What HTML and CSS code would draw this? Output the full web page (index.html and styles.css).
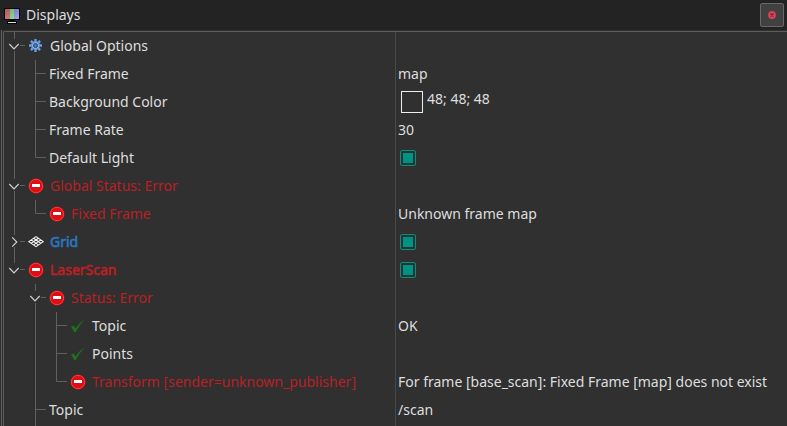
FILE: index.html
```html
<!DOCTYPE html>
<html lang="en">
<head>
<meta charset="utf-8">
<title>Displays</title>
<link rel="stylesheet" href="styles.css">
</head>
<body>
<svg class="defs" width="0" height="0">
  <defs>
    <symbol id="line" viewBox="0 0 21 28"><path class="br" d="M10.5 0V28"/></symbol>
    <symbol id="tee" viewBox="0 0 21 28"><path class="br" d="M10.5 0V28M11 13.5H21"/></symbol>
    <symbol id="end" viewBox="0 0 21 28"><path class="br" d="M10.5 0V13.5H21"/></symbol>
    <symbol id="open" viewBox="0 0 21 28"><path class="br" d="M10.5 0V7M10.5 19V28M16 13.5H21"/><path class="chev" d="M5.3 12L10 16.8L14.7 12"/></symbol>
    <symbol id="openend" viewBox="0 0 21 28"><path class="br" d="M10.5 0V7M16 13.5H21"/><path class="chev" d="M5.3 12L10 16.8L14.7 12"/></symbol>
    <symbol id="closed" viewBox="0 0 21 28"><path class="br" d="M10.5 0V7M10.5 19V28M16 13.5H21"/><path class="chev" d="M8.2 9.3L12.8 14L8.2 18.7"/></symbol>
    <symbol id="error" viewBox="0 0 16 16"><circle cx="8" cy="8" r="7.5" fill="#d0060c"/><circle cx="8" cy="8" r="6.7" fill="#e00d12" stroke="#f04a4c" stroke-width=".9"/><rect x="4" y="6" width="8" height="3" fill="#fff"/></symbol>
    <symbol id="check" viewBox="0 0 16 16"><path fill="#1d731d" d="M1.3 8.8L3.6 7.6L5.6 10.6C7.8 7 10.5 4 14.4 1.7C11 5.4 8 9.5 5.8 14L4.3 14.2Z"/></symbol>
    <symbol id="gear" viewBox="0 0 16 16"><g transform="translate(7.5 7.5)"><path stroke="#6f9fe0" stroke-width="2.3" d="M0-6.5V6.5M-6.5 0H6.5M-4.6-4.6L4.6 4.6M4.6-4.6L-4.6 4.6"/><circle r="4" fill="#8db4e8" stroke="#5b8bd0"/><circle r="2" fill="#4a76b0" stroke="#26466f"/></g></symbol>
    <symbol id="grid" viewBox="0 0 16 16"><path fill="#333" stroke="#f4f4f4" stroke-width="1.1" d="M.8 7.6L8 2.6L15.2 7.6L8 12.6ZM3.2 5.900L10.400 10.900M5.600 4.300L12.800 9.300M12.800 5.900L5.600 10.900M10.400 4.300L3.200 9.300"/></symbol>
  </defs>
</svg>
<header class="titlebar">
  <svg class="monitor" width="16" height="16" viewBox="0 0 16 16">
    <defs><linearGradient id="shade" x2="1" y2="1"><stop stop-color="#000" stop-opacity=".18"/><stop offset="1" stop-color="#fff" stop-opacity=".25"/></linearGradient></defs>
    <rect width="16" height="12" rx="1" fill="#050505"/><path fill="#d66f74" d="M1 1h5v10H1z"/><path fill="#83dd83" d="M6 1h4v10H6z"/><path fill="#8989e8" d="M10 1h5v10h-5z"/><path fill="url(#shade)" d="M1 1h14v10H1z"/><path fill="#050505" d="M6 12h4v1h3v3H3v-3h3z"/><path fill="#ddd" d="M4 14h8v1H4z"/>
  </svg>
  <h1>Displays</h1>
  <button class="close" aria-label="Close"><svg width="8" height="8" viewBox="0 0 8 8"><circle cx="4" cy="4" r="3.9" fill="#dd4157"/><path d="M2.5 2.5L5.5 5.5M5.5 2.5L2.5 5.5" stroke="#553039" stroke-width="1.1"/></svg></button>
</header>
<main class="panel">
  <div class="tree">
    <div class="row"><div class="name"><svg class="cell"><use href="#open"/></svg><svg class="icon"><use href="#gear"/></svg><span>Global Options</span></div><div class="value"></div></div>
    <div class="row"><div class="name"><svg class="cell"><use href="#line"/></svg><svg class="cell"><use href="#tee"/></svg><span>Fixed Frame</span></div><div class="value">map</div></div>
    <div class="row"><div class="name"><svg class="cell"><use href="#line"/></svg><svg class="cell"><use href="#tee"/></svg><span>Background Color</span></div><div class="value color"><i class="swatch"></i><span>48; 48; 48</span></div></div>
    <div class="row"><div class="name"><svg class="cell"><use href="#line"/></svg><svg class="cell"><use href="#tee"/></svg><span>Frame Rate</span></div><div class="value">30</div></div>
    <div class="row"><div class="name"><svg class="cell"><use href="#line"/></svg><svg class="cell"><use href="#end"/></svg><span>Default Light</span></div><div class="value"><i class="checkbox"></i></div></div>
    <div class="row error"><div class="name"><svg class="cell"><use href="#open"/></svg><svg class="icon"><use href="#error"/></svg><span>Global Status: Error</span></div><div class="value"></div></div>
    <div class="row error"><div class="name"><svg class="cell"><use href="#line"/></svg><svg class="cell"><use href="#end"/></svg><svg class="icon"><use href="#error"/></svg><span>Fixed Frame</span></div><div class="value">Unknown frame map</div></div>
    <div class="row display"><div class="name"><svg class="cell"><use href="#closed"/></svg><svg class="icon"><use href="#grid"/></svg><span>Grid</span></div><div class="value"><i class="checkbox"></i></div></div>
    <div class="row display error"><div class="name"><svg class="cell"><use href="#openend"/></svg><svg class="icon"><use href="#error"/></svg><span>LaserScan</span></div><div class="value"><i class="checkbox"></i></div></div>
    <div class="row error"><div class="name"><svg class="cell"></svg><svg class="cell"><use href="#open"/></svg><svg class="icon"><use href="#error"/></svg><span>Status: Error</span></div><div class="value"></div></div>
    <div class="row"><div class="name"><svg class="cell"></svg><svg class="cell"><use href="#line"/></svg><svg class="cell"><use href="#tee"/></svg><svg class="icon"><use href="#check"/></svg><span>Topic</span></div><div class="value">OK</div></div>
    <div class="row"><div class="name"><svg class="cell"></svg><svg class="cell"><use href="#line"/></svg><svg class="cell"><use href="#tee"/></svg><svg class="icon"><use href="#check"/></svg><span>Points</span></div><div class="value"></div></div>
    <div class="row error"><div class="name"><svg class="cell"></svg><svg class="cell"><use href="#line"/></svg><svg class="cell"><use href="#end"/></svg><svg class="icon"><use href="#error"/></svg><span>Transform [sender=unknown_publisher]</span></div><div class="value">For frame [base_scan]: Fixed Frame [map] does not exist</div></div>
    <div class="row"><div class="name"><svg class="cell"></svg><svg class="cell"><use href="#tee"/></svg><span>Topic</span></div><div class="value">/scan</div></div>
    <div class="row"><div class="name"><svg class="cell"></svg><svg class="cell"><use href="#line"/></svg></div><div class="value"></div></div>
  </div>
</main>
</body>
</html>
```
FILE: styles.css
```css
* { box-sizing: border-box; }
body {
  margin: 0;
  height: 426px;
  overflow: hidden;
  display: flex;
  flex-direction: column;
  background: #303030;
  color: #dedede;
  font: 14px/28px "Noto Sans", sans-serif;
}
.defs { position: absolute; }
.titlebar {
  flex: none;
  height: 30px;
  padding: 0 3px 0 4px;
  display: flex;
  align-items: center;
  gap: 6px;
  background: #232323;
}
.monitor { margin-top: 2px; }
h1 { margin: 0; flex: 1; font-size: inherit; font-weight: 400; }
.close {
  width: 24px;
  height: 24px;
  padding: 0;
  display: grid;
  place-items: center;
  border: 1px solid #686868;
  border-radius: 2px;
  background: #414141;
}
.panel { flex: 1; padding-left: 1px; min-height: 0; display: flex; }
.panel::before { content: ""; width: 1px; margin-right: 1px; background: #5c5c5c; }
.tree {
  flex: 1;
  min-width: 0;
  margin-top: 1px;
  border: solid #5c5c5c;
  border-width: 1px 0 0 1px;
  border-top-left-radius: 2px;
  overflow: hidden;
}
.row { display: grid; grid-template-columns: 392px 1fr; height: 28px; }
.name { display: flex; align-items: center; border-right: 1px solid #494949; }
.name span { margin-left: 3px; white-space: nowrap; }
.cell { flex: none; width: 21px; height: 28px; }
.icon { flex: none; width: 16px; height: 16px; margin-left: 3px; }
.icon + span { margin-left: 6px; }
.br { fill: none; stroke: #606060; }
.chev { fill: none; stroke: #cfcfcf; stroke-width: 1.2; }
.value { display: flex; align-items: center; padding-left: 2px; white-space: nowrap; }
.error .name { color: #b82024; }
.display .name span { color: #2a76c2; -webkit-text-stroke: .6px currentColor; }
.display.error .name span { color: #bc2024; }
.color span { margin: -6px 0 0 4px; }
.swatch { width: 22px; height: 22px; margin-left: 3px; border: 1px solid #eee; }
.checkbox {
  width: 16px;
  height: 16px;
  margin-left: 2px;
  padding: 2px;
  border: 1px solid #009282;
  border-radius: 2px;
  background: #009282 content-box;
}
```
